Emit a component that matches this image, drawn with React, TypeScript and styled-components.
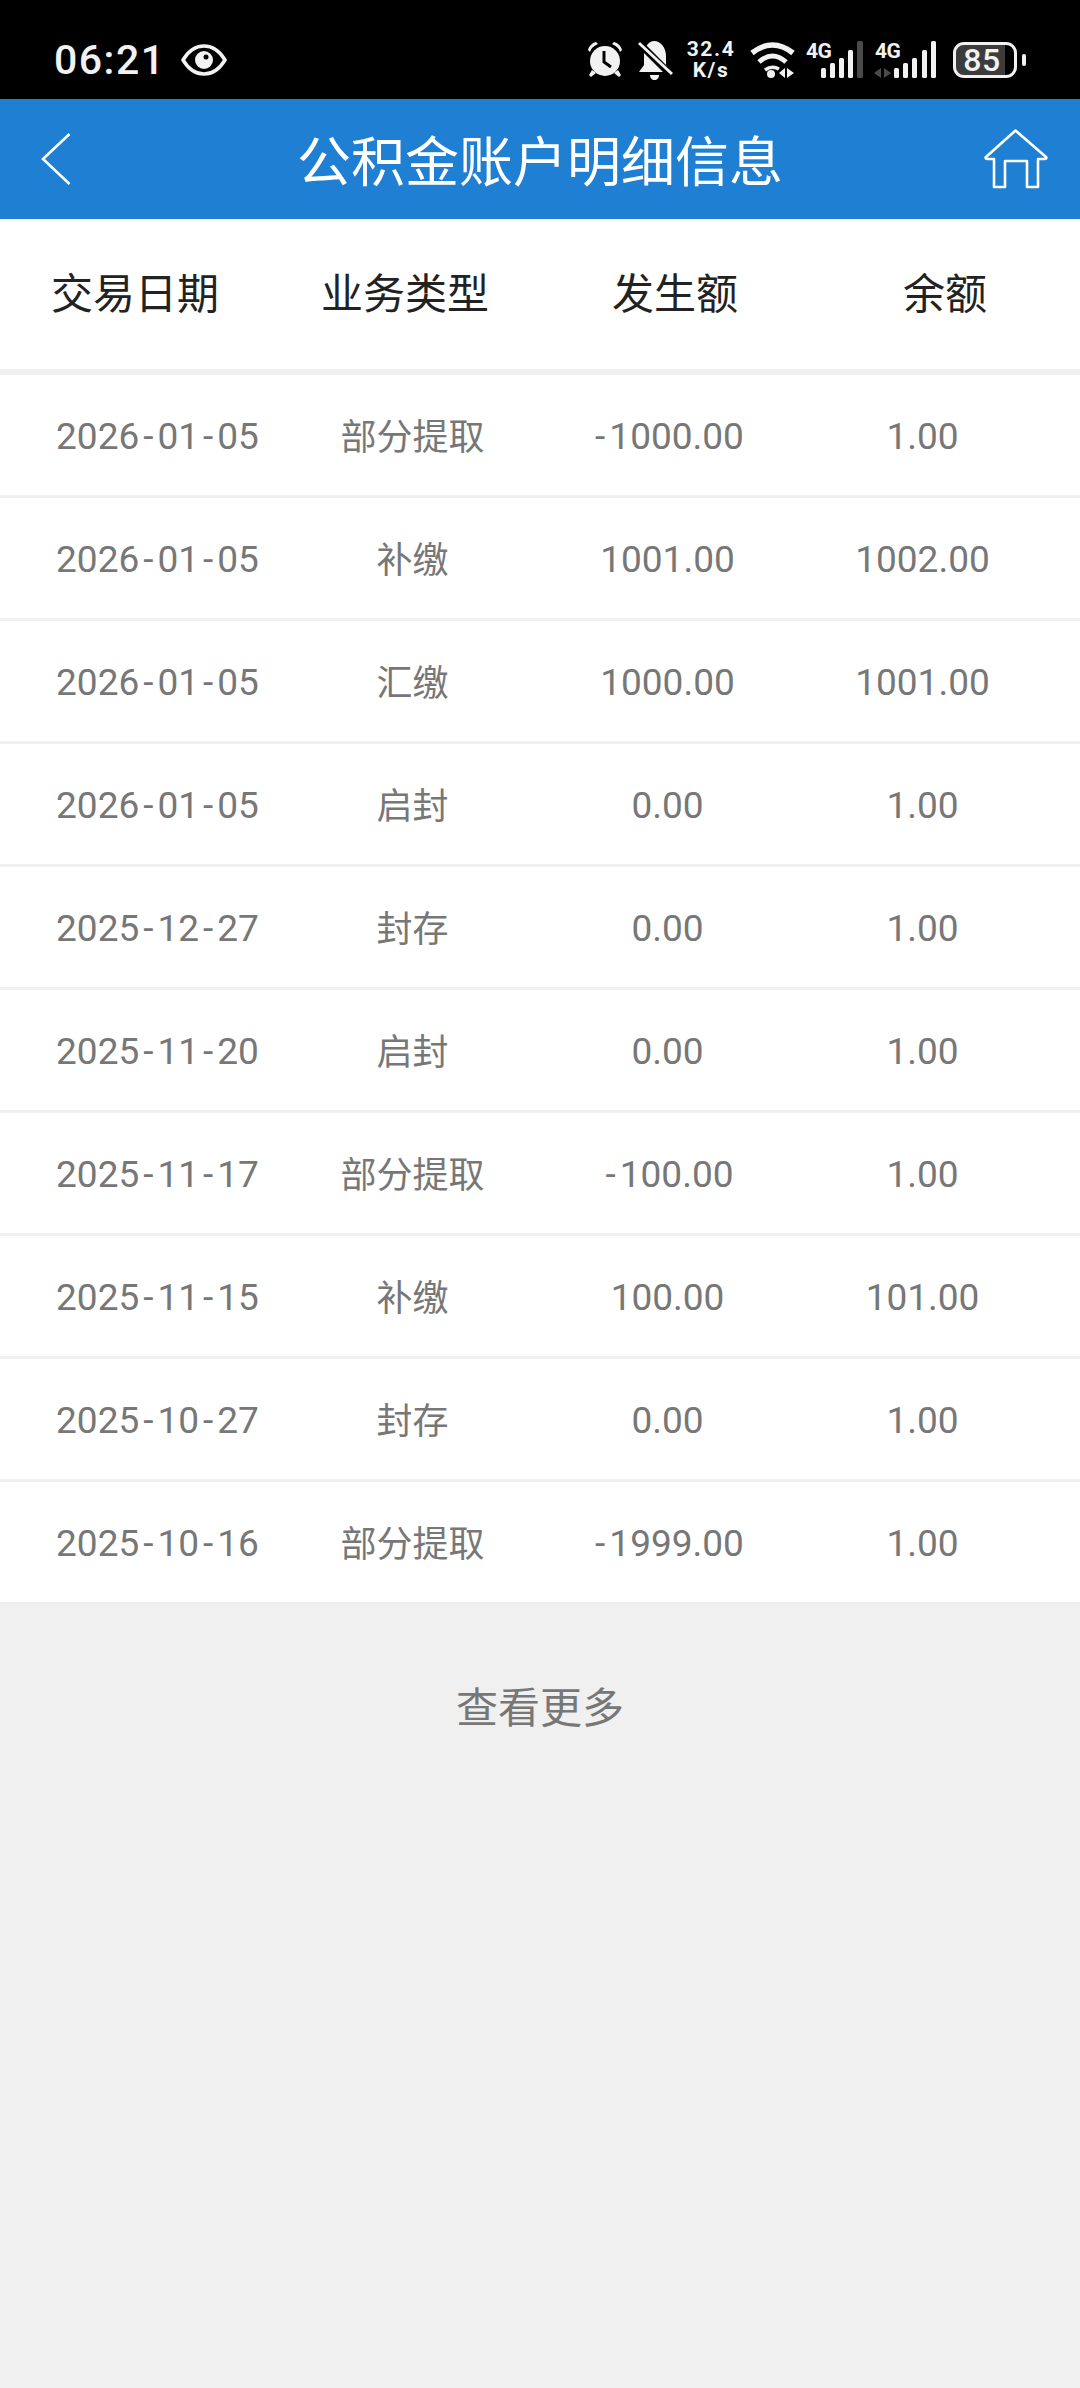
import React from "react";
import styled, { createGlobalStyle } from "styled-components";

const Global = createGlobalStyle`
  html, body { margin: 0; padding: 0; background: #f0f0f0; }
  body { font-family: "Roboto", "Noto Sans CJK SC", sans-serif; }
`;
const Page = styled.div`
  width: 1080px; height: 2388px; display: flex; flex-direction: column; background: #f0f0f0; overflow: hidden;
`;
const StatusBar = styled.div`
  height: 99px; background: #000; display: flex; align-items: center; justify-content: space-between;
  padding: 21px 54px 0 54px; box-sizing: border-box; color: #f2f2f2;
`;
const StatusLeft = styled.div`display: flex; align-items: center; gap: 15px;`;
const Time = styled.span`font-size: 41px; font-weight: 500; letter-spacing: 1.5px; line-height: 1;`;
const StatusIcons = styled.div`display: flex; align-items: center;`;
const StatusIcon = styled.svg<{ $ml?: number }>`
  display: block; flex: none; margin-left: ${(p) => p.$ml ?? 0}px; overflow: visible;
`;
const Speed = styled.div`
  margin-left: 13px; width: 50px; display: flex; flex-direction: column; align-items: center;
  font-size: 21px; font-weight: 700; line-height: 21px; letter-spacing: 1.6px; white-space: nowrap;
`;
const Battery = styled.div`
  margin-left: 16px; width: 64px; height: 36px; box-sizing: border-box; border: 3px solid #f2f2f2; border-radius: 11px;
  background: linear-gradient(90deg, #3c3c3c 0 84%, #000 84%); background-clip: padding-box;
  display: flex; align-items: center; justify-content: center; padding-right: 6px;
  font-size: 32px; font-weight: 500; line-height: 1; letter-spacing: 0.5px; color: #f2f2f2;
`;
const BatteryNub = styled.div`
  margin-left: 5px; width: 4px; height: 12px; border-radius: 2px; background: #f2f2f2;
`;
const Header = styled.div`
  height: 120px; background: #1e7fd3; display: grid; grid-template-columns: 1fr auto 1fr; align-items: center;
  padding: 0 36px; color: #fff;
`;
const BackIcon = styled.svg`display: block; justify-self: start; margin-left: 5px;`;
const HomeIcon = styled.svg`display: block; justify-self: end; margin-right: -4px;`;
const Title = styled.h1`
  margin: 0; font-size: 54px; font-weight: 400; color: #fff; font-family: "Noto Sans CJK SC", sans-serif; line-height: 1;
`;
const HeadRow = styled.div`
  height: 150px; background: #fff; display: grid; grid-template-columns: repeat(4, 270px); align-items: center; margin-bottom: 6px;
`;
const HeadCell = styled.div`
  text-align: center; font-size: 42px; line-height: 60px; padding-bottom: 6px; color: #222; font-family: "Noto Sans CJK SC", sans-serif;
`;
const List = styled.div`display: flex; flex-direction: column; gap: 3px;`;
const Row = styled.div`
  height: 120px; background: #fff; display: grid; grid-template-columns: repeat(4, 255px); padding: 0 30px; align-items: center;
`;
const Cell = styled.div<{ $cjk?: boolean }>`
  text-align: center; color: #777; white-space: nowrap;
  font-size: ${(p) => (p.$cjk ? 36 : 37)}px;
  ${(p) => (p.$cjk ? "padding-bottom: 2px;" : "padding-top: 2px;")}
  font-family: ${(p) => (p.$cjk ? '"Noto Sans CJK SC", sans-serif' : '"Roboto", sans-serif')};
`;
const Hyphen = styled.span`padding: 0 4px;`;
const More = styled.div`
  margin-top: 72px; text-align: center; font-size: 42px; color: #777; font-family: "Noto Sans CJK SC", sans-serif;
`;

const rows = [
  ["2026-01-05", "部分提取", "-1000.00", "1.00"],
  ["2026-01-05", "补缴", "1001.00", "1002.00"],
  ["2026-01-05", "汇缴", "1000.00", "1001.00"],
  ["2026-01-05", "启封", "0.00", "1.00"],
  ["2025-12-27", "封存", "0.00", "1.00"],
  ["2025-11-20", "启封", "0.00", "1.00"],
  ["2025-11-17", "部分提取", "-100.00", "1.00"],
  ["2025-11-15", "补缴", "100.00", "101.00"],
  ["2025-10-27", "封存", "0.00", "1.00"],
  ["2025-10-16", "部分提取", "-1999.00", "1.00"],
];

const C = "#f2f2f2";

function withHyphens(text: string) {
  return text.split("-").map((part, i) => (
    <React.Fragment key={i}>
      {i > 0 && <Hyphen>-</Hyphen>}
      {part}
    </React.Fragment>
  ));
}

export default function App() {
  return (
    <Page>
      <Global />
      <StatusBar>
        <StatusLeft>
          <Time>06:21</Time>
          <svg width="46" height="32" viewBox="0 0 46 32">
            <path d="M2 16C8 6 15 2 23 2s15 4 21 14c-6 10-13 14-21 14S8 26 2 16z" fill="none" stroke={C} strokeWidth="3.5" />
            <circle cx="23" cy="16" r="9" fill={C} />
            <circle cx="25" cy="13" r="2.5" fill="#000" />
          </svg>
        </StatusLeft>
        <StatusIcons>
          <StatusIcon width="36" height="36" viewBox="0 0 36 36">
            <circle cx="18" cy="19" r="15" fill={C} />
            <path d="M1 8C2 4 5 1 9 0l2 2C7 4 4 6 3 10zM35 8c-1-4-4-7-8-8l-2 2c4 2 7 4 8 8z" fill={C} />
            <path d="M5 28l-3 5 2 2 5-4zM31 28l3 5-2 2-5-4z" fill={C} />
            <path d="M17 9v11l7 5" fill="none" stroke="#000" strokeWidth="3" />
          </StatusIcon>
          <StatusIcon $ml={15} width="35" height="41" viewBox="0 0 35 41">
            <path d="M16 1c7 0 12 7 12 15v9l5 7H1l5-7V14C7 6 11 1 16 1z" fill={C} />
            <path d="M12 35h9c0 3-2 5-4.500 5S12 38 12 35z" fill={C} />
            <path d="M-2 0l35 35" stroke="#000" strokeWidth="7" />
            <path d="M1 3l33 31" stroke={C} strokeWidth="3" />
          </StatusIcon>
          <Speed>
            <span>32.4</span>
            <span>K/s</span>
          </Speed>
          <StatusIcon $ml={13} width="47" height="36" viewBox="0 0 47 36">
            <g fill="none" stroke={C}>
              <path d="M3 11Q23.500 -5 44 11" strokeWidth="5.500" />
              <path d="M10 20Q23.500 8 37 20" strokeWidth="5" />
              <path d="M16 28Q23 23 30 27" strokeWidth="3.500" />
            </g>
            <circle cx="22" cy="32" r="4" fill={C} />
            <path d="M36 26l-6 5 6 5zM38 26l7 5-7 5z" fill={C} />
          </StatusIcon>
          <StatusIcon $ml={9} width="60" height="38" viewBox="0 0 60 38">
            <text x="1" y="17" fontFamily="Roboto" fontWeight="700" fontSize="21" letterSpacing="-0.5" fill={C}>4G</text>
            <g fill={C}>
              <rect x="16" y="27" width="5" height="10" rx="1.500" />
              <rect x="25" y="22" width="5" height="15" rx="1.500" />
              <rect x="34" y="17" width="5" height="20" rx="1.500" />
              <rect x="43" y="9" width="5" height="28" rx="1.500" />
            </g>
            <rect x="52" y="0" width="6" height="37" rx="1.500" fill="#4a4a4a" />
          </StatusIcon>
          <StatusIcon $ml={8} width="64" height="38" viewBox="0 0 64 38">
            <text x="2" y="17" fontFamily="Roboto" fontWeight="700" fontSize="21" letterSpacing="-0.5" fill={C}>4G</text>
            <path d="M8 27l-7 5 7 5zM11 27l7 5-7 5z" fill="#4a4a4a" />
            <g fill={C}>
              <rect x="21" y="27" width="5" height="10" rx="1.500" />
              <rect x="30" y="22" width="5" height="15" rx="1.500" />
              <rect x="39" y="17" width="5" height="20" rx="1.500" />
              <rect x="49" y="9" width="5" height="28" rx="1.500" />
              <rect x="58" y="0" width="5" height="37" rx="1.500" />
            </g>
          </StatusIcon>
          <Battery>85</Battery>
          <BatteryNub />
        </StatusIcons>
      </StatusBar>
      <Header>
        <BackIcon width="30" height="54" viewBox="0 0 30 54">
          <path d="M28.500 2L2 27l26.500 25" fill="none" stroke="#fff" strokeWidth="2.600" />
        </BackIcon>
        <Title>公积金账户明细信息</Title>
        <HomeIcon width="64" height="62" viewBox="0 0 64 62">
          <path d="M31.500 2.500L2 29c-.8.8-.4 2 1 2h7v28h11V33h22v26h11V31h7c1.400 0 1.800-1.200 1-2z" fill="none" stroke="#fff" strokeWidth="2.600" strokeLinejoin="round" />
        </HomeIcon>
      </Header>
      <HeadRow>
        <HeadCell>交易日期</HeadCell>
        <HeadCell>业务类型</HeadCell>
        <HeadCell>发生额</HeadCell>
        <HeadCell>余额</HeadCell>
      </HeadRow>
      <List>
        {rows.map((r, i) => (
          <Row key={i}>
            {r.map((c, j) => <Cell key={j} $cjk={j === 1}>{j === 1 ? c : withHyphens(c)}</Cell>)}
          </Row>
        ))}
      </List>
      <More>查看更多</More>
    </Page>
  );
}
